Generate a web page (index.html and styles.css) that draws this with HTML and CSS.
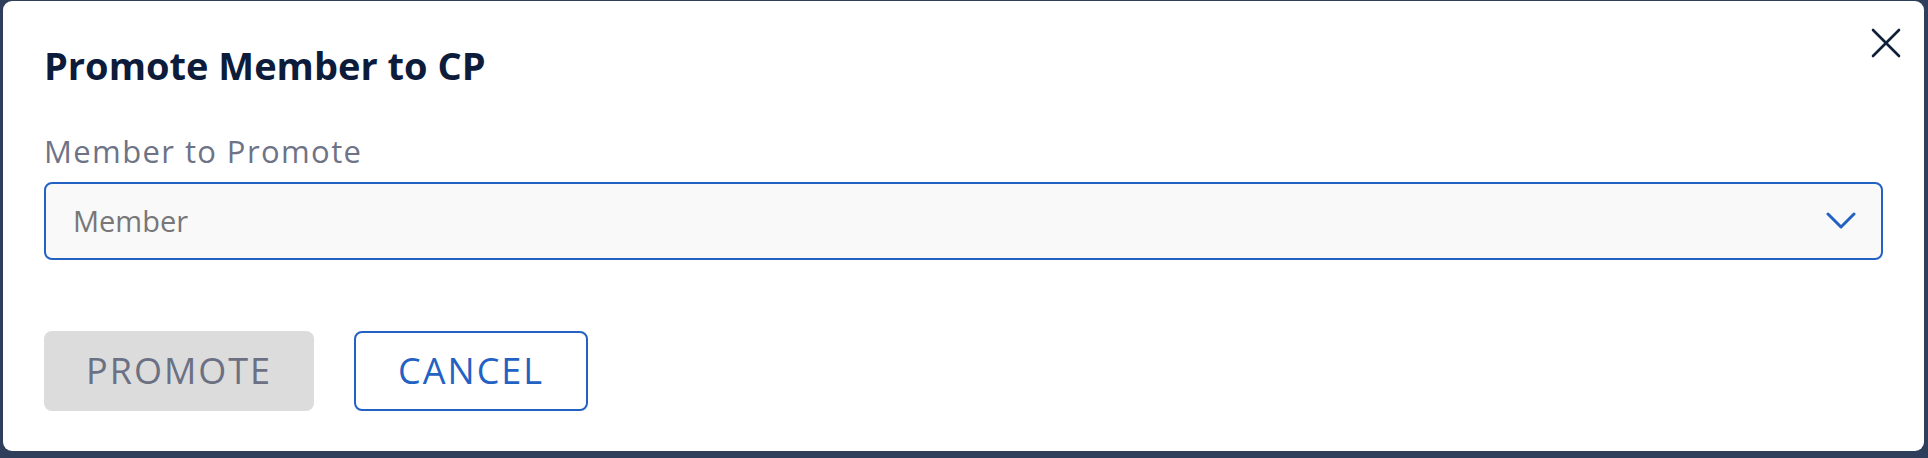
FILE: index.html
```html
<!DOCTYPE html>
<html lang="en">
<head>
<meta charset="utf-8">
<title>Promote Member to CP</title>
<link rel="stylesheet" href="styles.css">
</head>
<body>
<div class="backdrop">
  <div class="modal" role="dialog" aria-labelledby="modal-title">
    <button class="close" aria-label="Close">
      <svg width="30" height="30" viewBox="0 0 30 30" aria-hidden="true">
        <path d="M2 2 L28 28 M28 2 L2 28" stroke="#0f1f38" stroke-width="2.6" stroke-linecap="round" fill="none"/>
      </svg>
    </button>
    <h2 class="title" id="modal-title">Promote Member to CP</h2>
    <label class="field-label" for="member">Member to Promote</label>
    <div class="select" id="member">
      <span class="placeholder">Member</span>
      <svg class="chevron" width="30" height="18" viewBox="0 0 30 18" aria-hidden="true">
        <polyline points="2,2 15,15 28,2" stroke="#2362c3" stroke-width="3" stroke-linecap="round" stroke-linejoin="round" fill="none"/>
      </svg>
    </div>
    <div class="actions">
      <button class="btn btn-disabled" disabled>PROMOTE</button>
      <button class="btn btn-outline">CANCEL</button>
    </div>
  </div>
</div>
</body>
</html>
```
FILE: styles.css
```css
html, body {
  margin: 0;
  padding: 0;
  height: 100%;
}
body {
  background: #2f3f5b;
  font-family: "Open Sans", "Noto Sans", Arial, sans-serif;
}
.backdrop {
  padding: 1px 4px 0 3px;
}
.modal {
  position: relative;
  background: #ffffff;
  border-radius: 9px;
  height: 450px;
  box-sizing: border-box;
  padding: 39px 41px 40px 41px;
  display: flex;
  flex-direction: column;
}
.close {
  position: absolute;
  top: 27px;
  right: 23px;
  width: 30px;
  height: 30px;
  padding: 0;
  border: 0;
  background: transparent;
  display: flex;
}
.title {
  margin: 0;
  font-size: 38px;
  line-height: 50px;
  font-weight: 700;
  color: #0c1c3a;
}
.field-label {
  margin-top: 41px;
  font-size: 31px;
  line-height: 40px;
  letter-spacing: 1.4px;
  color: #6e7386;
}
.select {
  margin-top: 11px;
  height: 78px;
  box-sizing: border-box;
  border: 2px solid #2362c3;
  border-radius: 8px;
  background: #f9f9f9;
  display: flex;
  align-items: center;
  justify-content: space-between;
  padding: 0 25px 0 27px;
}
.placeholder {
  font-size: 29px;
  line-height: 74px;
  color: #777777;
}
.chevron {
  display: block;
}
.actions {
  margin-top: 71px;
  display: flex;
  gap: 40px;
}
.btn {
  height: 80px;
  box-sizing: border-box;
  border-radius: 8px;
  border: 2px solid transparent;
  padding: 0 40px;
  font-family: "Open Sans", "Noto Sans", Arial, sans-serif;
  font-size: 36px;
  line-height: 76px;
  letter-spacing: 2px;
  background: transparent;
}
.btn-disabled {
  background: #dcdcdc;
  color: #6b7083;
}
.btn-outline {
  background: #ffffff;
  border-color: #2362c3;
  color: #2362c3;
  padding: 0 42px;
}
```
